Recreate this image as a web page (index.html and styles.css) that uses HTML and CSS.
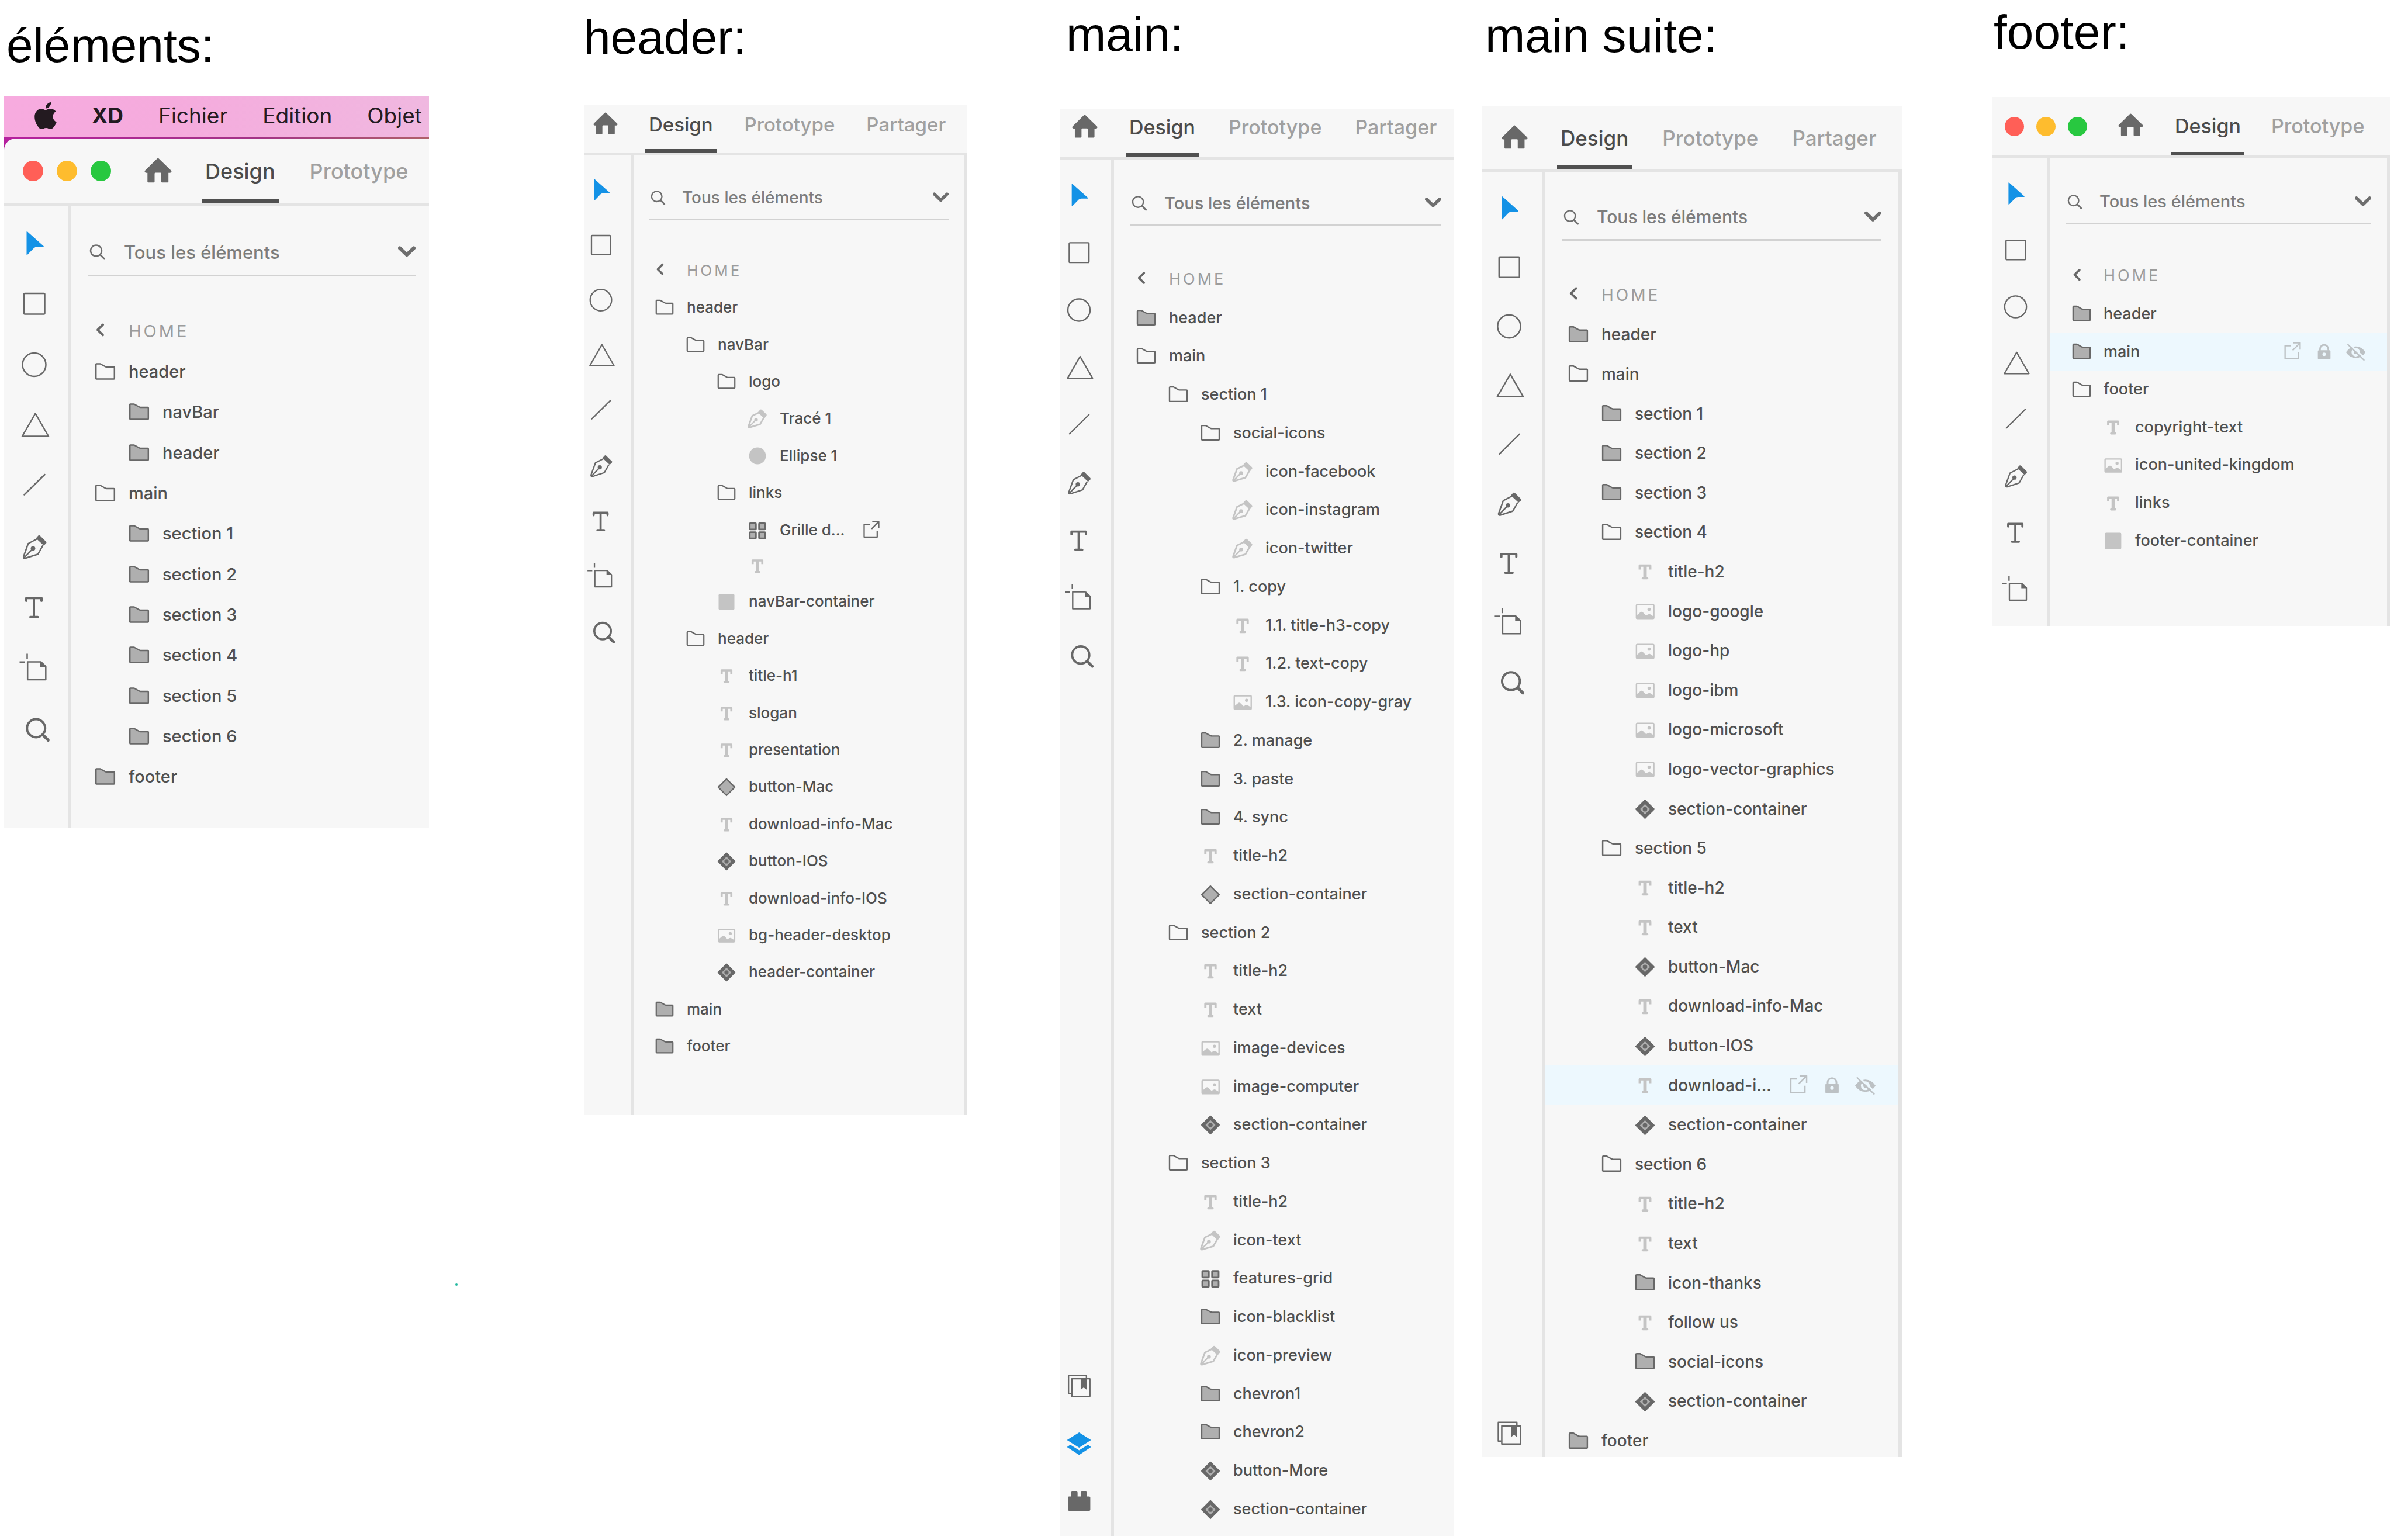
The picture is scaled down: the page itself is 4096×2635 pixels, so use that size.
FILE: index.html
```html
<!DOCTYPE html>
<html lang="fr">
<head>
<meta charset="utf-8">
<title>Calques XD</title>
<link rel="stylesheet" href="styles.css">
</head>
<body>
<svg class="sprite" aria-hidden="true">
  <symbol id="apple" viewBox="0 0 24 24"><path fill="currentColor" d="M12.152 6.896c-.948 0-2.415-1.078-3.96-1.04-2.04.027-3.91 1.183-4.961 3.014-2.117 3.675-.546 9.103 1.519 12.09 1.013 1.454 2.208 3.09 3.792 3.039 1.52-.065 2.09-.987 3.935-.987 1.831 0 2.35.987 3.96.948 1.637-.026 2.676-1.48 3.676-2.948 1.156-1.688 1.636-3.325 1.662-3.415-.039-.013-3.182-1.221-3.22-4.857-.026-3.04 2.48-4.494 2.597-4.559-1.429-2.09-3.623-2.324-4.39-2.376-2-.156-3.675 1.09-4.61 1.09zM15.53 3.83c.843-1.012 1.4-2.427 1.245-3.83-1.207.052-2.662.805-3.532 1.818-.78.896-1.454 2.338-1.273 3.714 1.338.104 2.715-.688 3.559-1.701"/></symbol>
  <symbol id="home" viewBox="0 0 47 42"><path fill="currentColor" d="M22 .8Q23.3-.4 24.600.8L46 21.500Q47.500 25 44 25.200H41.200V40.500Q41.200 41.700 40 41.700H30.200Q29 41.700 29 40.500V26.500Q29 25 27.500 25H19Q17.500 25 17.500 26.500V40.500Q17.500 41.700 16.300 41.700H6.500Q5.300 41.700 5.300 40.500V25.200H3Q-.5 25 1 21.500Z"/></symbol>
  <symbol id="cursor" viewBox="0 0 60 60"><path fill="#1492e6" d="M16.500 10.500Q16.800 9.500 17.800 10.300L45.500 35Q46.500 36.300 45 36.500H34Q31 36.500 29 38.500L18 49.800Q16.800 50.800 16.500 49.500Z"/></symbol>
  <symbol id="square" viewBox="0 0 60 60"><rect class="line" x="12" y="12" width="35.500" height="35.500" rx="1.500"/></symbol>
  <symbol id="circle" viewBox="0 0 60 60"><circle class="line" cx="29.500" cy="30" r="20"/></symbol>
  <symbol id="triangle" viewBox="0 0 60 60"><path class="line" d="M31.500 9.500L54 48.500H9Z"/></symbol>
  <symbol id="stroke" viewBox="0 0 60 60"><path class="line" stroke-linecap="round" d="M12.500 44.500L47.500 10"/></symbol>
  <symbol id="pen" viewBox="0 0 60 60"><path class="line" d="M34.700 15L19.300 23L11.200 45.500Q10.800 48.800 14 48.300L36 41.200L44.500 26"/><path class="line" d="M12 47.500L27.500 31.500"/><circle fill="currentColor" cx="27.500" cy="31.300" r="3.900"/><path fill="currentColor" d="M36.600 9.200Q38 8.400 39.500 9.500L50 20Q51 21.500 50 22.500L46 26.500L32.500 14Z"/></symbol>
  <symbol id="type" viewBox="0 0 60 60"><path class="line w4" stroke-linecap="round" d="M16 17V12.300H42V17M29 12.300V44.800M23 44.800H35.500"/></symbol>
  <symbol id="artboard" viewBox="0 0 60 60"><path class="line" d="M41 17.500H18.200V48H49.300V25.500L41 17.500"/><path fill="currentColor" d="M40 17V26.200H50.300Z"/><path class="line" d="M17.500 3.500V12.500M4.500 17.800H13.500"/></symbol>
  <symbol id="zoom" viewBox="0 0 60 60"><circle class="line w4" cx="32.700" cy="27" r="15.500"/><path class="line w5" stroke-linecap="round" d="M44.500 38.500L53.500 47.500"/></symbol>
  <symbol id="library" viewBox="0 0 60 60"><path class="line" d="M15.800 43.500H10.700V11H43V16.500"/><rect class="line" x="16.700" y="17" width="32.500" height="31.500"/><path fill="currentColor" d="M32.600 17H43.500V36.800L38 32.500L32.600 36.800Z"/></symbol>
  <symbol id="layers" viewBox="0 0 60 60"><path fill="#1492e6" d="M29.800 9.500L51.300 23.200L29.800 36.800L7.900 23.200ZM7.900 35.800L13.900 31.700L29.800 41.600L45.700 31.700L51.300 35.800L29.800 50.100Z"/></symbol>
  <symbol id="plugin" viewBox="0 0 60 60"><path fill="currentColor" d="M11.500 21.500H15.300V14.500Q15.300 12.600 17.200 12.600H25.100Q27 12.600 27 14.500V21.500H32.600V14.500Q32.600 12.600 34.500 12.600H42Q43.800 12.600 43.800 14.500V21.500H48Q49.900 21.500 49.900 23.500V45.500Q49.900 47.400 48 47.400H11.600Q9.700 47.400 9.700 45.500V23.500Q9.700 21.500 11.500 21.500Z"/></symbol>
  <symbol id="search" viewBox="0 0 28 28"><circle class="line" cx="11.500" cy="12" r="9.500"/><path class="line w3" stroke-linecap="round" d="M18.500 19L25.500 26"/></symbol>
  <symbol id="chevron" viewBox="0 0 30 20"><path class="line w6" stroke-linecap="round" d="M3 3.500L15 15L27 3.500"/></symbol>
  <symbol id="back" viewBox="0 0 40 40"><path class="line w4" stroke-linecap="round" d="M16 8.500L7 17.400L16 26.300"/></symbol>
  <symbol id="open" viewBox="0 0 40 40"><path class="line" d="M4.200 7.500Q4.200 6.500 5.200 6.500H11.500L20.500 11.500Q21.500 12 22.500 12H34.800Q35.800 12 35.800 13V31.500Q35.800 32.500 34.800 32.500H5.200Q4.200 32.500 4.200 31.500Z"/></symbol>
  <symbol id="folder" viewBox="0 0 40 40"><path class="line filled" d="M4.200 7.500Q4.200 6.500 5.200 6.500H11.500L20.500 11.500Q21.500 12 22.500 12H34.800Q35.800 12 35.800 13V31.500Q35.800 32.500 34.800 32.500H5.200Q4.200 32.500 4.200 31.500Z"/></symbol>
  <symbol id="path" viewBox="0 0 40 40"><g color="#c4c4c4"><path class="line w3" d="M23.500 8.500L10 15L2.800 35Q2.500 37.500 5.500 36.800L25 31L32.500 18"/><path class="line" d="M3.500 36.500L17 22.500"/><circle fill="currentColor" cx="17.300" cy="22.500" r="3.400"/><path fill="currentColor" d="M25 3.400Q26.500 2.200 28 3.400L37 12Q38.200 13.500 37 15L33 20L20.500 8.500Z"/></g></symbol>
  <symbol id="ellipse" viewBox="0 0 40 40"><circle fill="#c4c4c4" cx="20" cy="20" r="16"/></symbol>
  <symbol id="rectangle" viewBox="0 0 40 40"><rect fill="#c4c4c4" x="5" y="6" width="30" height="30" rx="2"/></symbol>
  <symbol id="text" viewBox="0 0 40 40"><g color="#c4c4c4"><path class="line w4" d="M10.800 17V10H29.200V17" stroke-linecap="butt"/><path class="line w6" d="M20 9V32"/><path class="line w4" stroke-linecap="round" d="M16.300 32H23.700"/></g></symbol>
  <symbol id="image" viewBox="0 0 40 40"><g color="#c4c4c4"><rect class="line" x="5" y="9" width="30.500" height="24" rx="1.500"/><path fill="currentColor" d="M5 28L12 22Q14 20.500 16 22L22 28Q26 24.500 28.500 25.500L35 29.500V33.500H5Z"/><circle fill="currentColor" cx="27.200" cy="17" r="2.900"/></g></symbol>
  <symbol id="grid" viewBox="0 0 40 40"><g class="line w3 filled"><rect x="5.300" y="7" width="11.800" height="11.800" rx="1"/><rect x="22.900" y="7" width="11.800" height="11.800" rx="1"/><rect x="5.300" y="24" width="11.800" height="11.800" rx="1"/><rect x="22.900" y="24" width="11.800" height="11.800" rx="1"/></g></symbol>
  <symbol id="instance" viewBox="0 0 40 40"><path class="line filled" d="M20 5.300L35.700 21L20 36.700L4.300 21Z"/></symbol>
  <symbol id="component" viewBox="0 0 40 40"><path fill="currentColor" stroke="currentColor" stroke-width="2" stroke-linejoin="round" d="M20 5L36 21L20 37L4 21Z"/><path fill="#afafaf" d="M20 12L29 21L20 30L11 21Z"/><circle fill="currentColor" cx="20" cy="21" r="4"/></symbol>
  <symbol id="export" viewBox="0 0 40 40"><path class="line" d="M16.800 9.300H6.100V33.300H30.900V21.300M20.200 17.800L33.900 3.900M21.500 3.900H33.900V16.400"/></symbol>
  <symbol id="lock" viewBox="0 0 40 40"><path class="line w3" d="M12.300 18V15.500A7.700 7.700 0 0 1 27.700 15.500V18"/><path fill="currentColor" fill-rule="evenodd" d="M10.300 17.500H29.700Q31.700 17.500 31.700 19.500V32.700Q31.700 34.700 29.700 34.700H10.300Q8.300 34.700 8.300 32.700V19.500Q8.300 17.500 10.300 17.500ZM20 22A3.200 3.200 0 1 0 20 28.400A3.200 3.200 0 1 0 20 22Z"/></symbol>
  <symbol id="hidden" viewBox="0 0 40 40"><path fill="currentColor" fill-rule="evenodd" d="M2 21.300Q9 10.500 20 10.500T38 21.300Q31 32 20 32T2 21.300ZM20 13.500A7.800 7.800 0 1 0 20 29.100A7.800 7.800 0 1 0 20 13.500Z"/><circle fill="currentColor" cx="20" cy="21.300" r="3.500"/><path stroke="#edf8fe" stroke-width="3" d="M6.500 4.500L39 34.500"/><path class="line" d="M5 6.500L36 36.500"/></symbol>
</svg>

<main class="board">

<section class="column elements">
  <h2 class="title">éléments:</h2>
  <div class="panel">
    <nav class="menubar" aria-label="Menu">
      <svg class="apple"><use href="#apple"/></svg>
      <a class="app" href="#">XD</a><a href="#">Fichier</a><a href="#">Edition</a><a href="#">Objet</a>
    </nav>
    <div class="window">
    <header class="tabbar">
      <span class="light red"></span><span class="light amber"></span><span class="light green"></span>
      <button class="home" aria-label="Accueil"><svg><use href="#home"/></svg></button>
      <button class="tab active">Design</button><button class="tab">Prototype</button>
    </header>
    <div class="body">
      <div class="rail"><div class="tools">
        <button aria-label="Sélection"><svg><use href="#cursor"/></svg></button>
        <button aria-label="Rectangle"><svg><use href="#square"/></svg></button>
        <button aria-label="Ellipse"><svg><use href="#circle"/></svg></button>
        <button aria-label="Polygone"><svg><use href="#triangle"/></svg></button>
        <button aria-label="Trait"><svg><use href="#stroke"/></svg></button>
        <button aria-label="Plume"><svg><use href="#pen"/></svg></button>
        <button aria-label="Texte"><svg><use href="#type"/></svg></button>
        <button aria-label="Plan de travail"><svg><use href="#artboard"/></svg></button>
        <button aria-label="Zoom"><svg><use href="#zoom"/></svg></button>
      </div></div>
      <div class="content">
        <div class="search"><svg class="glass"><use href="#search"/></svg><input type="text" aria-label="Rechercher" placeholder="Tous les éléments"><button aria-label="Filtrer"><svg><use href="#chevron"/></svg></button></div>
        <ul class="tree">
          <li class="crumb"><svg><use href="#back"/></svg>HOME</li>
          <li><svg><use href="#open"/></svg>header</li>
          <li class="l1"><svg><use href="#folder"/></svg>navBar</li>
          <li class="l1"><svg><use href="#folder"/></svg>header</li>
          <li><svg><use href="#open"/></svg>main</li>
          <li class="l1"><svg><use href="#folder"/></svg>section 1</li>
          <li class="l1"><svg><use href="#folder"/></svg>section 2</li>
          <li class="l1"><svg><use href="#folder"/></svg>section 3</li>
          <li class="l1"><svg><use href="#folder"/></svg>section 4</li>
          <li class="l1"><svg><use href="#folder"/></svg>section 5</li>
          <li class="l1"><svg><use href="#folder"/></svg>section 6</li>
          <li><svg><use href="#folder"/></svg>footer</li>
        </ul>
      </div>
    </div>
    </div>
  </div>
</section>

<span class="speck"></span>

<section class="column header">
  <h2 class="title">header:</h2>
  <div class="panel">
    <header class="tabbar">
      <button class="home" aria-label="Accueil"><svg><use href="#home"/></svg></button>
      <button class="tab active">Design</button><button class="tab">Prototype</button><button class="tab">Partager</button>
    </header>
    <div class="body">
      <div class="rail"><div class="tools">
        <button aria-label="Sélection"><svg><use href="#cursor"/></svg></button>
        <button aria-label="Rectangle"><svg><use href="#square"/></svg></button>
        <button aria-label="Ellipse"><svg><use href="#circle"/></svg></button>
        <button aria-label="Polygone"><svg><use href="#triangle"/></svg></button>
        <button aria-label="Trait"><svg><use href="#stroke"/></svg></button>
        <button aria-label="Plume"><svg><use href="#pen"/></svg></button>
        <button aria-label="Texte"><svg><use href="#type"/></svg></button>
        <button aria-label="Plan de travail"><svg><use href="#artboard"/></svg></button>
        <button aria-label="Zoom"><svg><use href="#zoom"/></svg></button>
      </div></div>
      <div class="content">
        <div class="search"><svg class="glass"><use href="#search"/></svg><input type="text" aria-label="Rechercher" placeholder="Tous les éléments"><button aria-label="Filtrer"><svg><use href="#chevron"/></svg></button></div>
        <ul class="tree">
          <li class="crumb"><svg><use href="#back"/></svg>HOME</li>
          <li><svg><use href="#open"/></svg>header</li>
          <li class="l1"><svg><use href="#open"/></svg>navBar</li>
          <li class="l2"><svg><use href="#open"/></svg>logo</li>
          <li class="l3"><svg><use href="#path"/></svg>Tracé 1</li>
          <li class="l3"><svg><use href="#ellipse"/></svg>Ellipse 1</li>
          <li class="l2"><svg><use href="#open"/></svg>links</li>
          <li class="l3"><svg><use href="#grid"/></svg>Grille d...<span class="actions"><button aria-label="Exporter"><svg><use href="#export"/></svg></button></span></li>
          <li class="l3"><svg><use href="#text"/></svg></li>
          <li class="l2"><svg><use href="#rectangle"/></svg>navBar-container</li>
          <li class="l1"><svg><use href="#open"/></svg>header</li>
          <li class="l2"><svg><use href="#text"/></svg>title-h1</li>
          <li class="l2"><svg><use href="#text"/></svg>slogan</li>
          <li class="l2"><svg><use href="#text"/></svg>presentation</li>
          <li class="l2"><svg><use href="#instance"/></svg>button-Mac</li>
          <li class="l2"><svg><use href="#text"/></svg>download-info-Mac</li>
          <li class="l2"><svg><use href="#component"/></svg>button-IOS</li>
          <li class="l2"><svg><use href="#text"/></svg>download-info-IOS</li>
          <li class="l2"><svg><use href="#image"/></svg>bg-header-desktop</li>
          <li class="l2"><svg><use href="#component"/></svg>header-container</li>
          <li><svg><use href="#folder"/></svg>main</li>
          <li><svg><use href="#folder"/></svg>footer</li>
        </ul>
      </div>
    </div>
  </div>
</section>

<section class="column content-main">
  <h2 class="title">main:</h2>
  <div class="panel">
    <header class="tabbar">
      <button class="home" aria-label="Accueil"><svg><use href="#home"/></svg></button>
      <button class="tab active">Design</button><button class="tab">Prototype</button><button class="tab">Partager</button>
    </header>
    <div class="body">
      <div class="rail"><div class="tools">
        <button aria-label="Sélection"><svg><use href="#cursor"/></svg></button>
        <button aria-label="Rectangle"><svg><use href="#square"/></svg></button>
        <button aria-label="Ellipse"><svg><use href="#circle"/></svg></button>
        <button aria-label="Polygone"><svg><use href="#triangle"/></svg></button>
        <button aria-label="Trait"><svg><use href="#stroke"/></svg></button>
        <button aria-label="Plume"><svg><use href="#pen"/></svg></button>
        <button aria-label="Texte"><svg><use href="#type"/></svg></button>
        <button aria-label="Plan de travail"><svg><use href="#artboard"/></svg></button>
        <button aria-label="Zoom"><svg><use href="#zoom"/></svg></button>
      </div>
      <div class="views">
        <button aria-label="Bibliothèques"><svg><use href="#library"/></svg></button>
        <button aria-label="Calques"><svg><use href="#layers"/></svg></button>
        <button aria-label="Modules"><svg><use href="#plugin"/></svg></button>
      </div></div>
      <div class="content">
        <div class="search"><svg class="glass"><use href="#search"/></svg><input type="text" aria-label="Rechercher" placeholder="Tous les éléments"><button aria-label="Filtrer"><svg><use href="#chevron"/></svg></button></div>
        <ul class="tree">
          <li class="crumb"><svg><use href="#back"/></svg>HOME</li>
          <li><svg><use href="#folder"/></svg>header</li>
          <li><svg><use href="#open"/></svg>main</li>
          <li class="l1"><svg><use href="#open"/></svg>section 1</li>
          <li class="l2"><svg><use href="#open"/></svg>social-icons</li>
          <li class="l3"><svg><use href="#path"/></svg>icon-facebook</li>
          <li class="l3"><svg><use href="#path"/></svg>icon-instagram</li>
          <li class="l3"><svg><use href="#path"/></svg>icon-twitter</li>
          <li class="l2"><svg><use href="#open"/></svg>1. copy</li>
          <li class="l3"><svg><use href="#text"/></svg>1.1. title-h3-copy</li>
          <li class="l3"><svg><use href="#text"/></svg>1.2. text-copy</li>
          <li class="l3"><svg><use href="#image"/></svg>1.3. icon-copy-gray</li>
          <li class="l2"><svg><use href="#folder"/></svg>2. manage</li>
          <li class="l2"><svg><use href="#folder"/></svg>3. paste</li>
          <li class="l2"><svg><use href="#folder"/></svg>4. sync</li>
          <li class="l2"><svg><use href="#text"/></svg>title-h2</li>
          <li class="l2"><svg><use href="#instance"/></svg>section-container</li>
          <li class="l1"><svg><use href="#open"/></svg>section 2</li>
          <li class="l2"><svg><use href="#text"/></svg>title-h2</li>
          <li class="l2"><svg><use href="#text"/></svg>text</li>
          <li class="l2"><svg><use href="#image"/></svg>image-devices</li>
          <li class="l2"><svg><use href="#image"/></svg>image-computer</li>
          <li class="l2"><svg><use href="#component"/></svg>section-container</li>
          <li class="l1"><svg><use href="#open"/></svg>section 3</li>
          <li class="l2"><svg><use href="#text"/></svg>title-h2</li>
          <li class="l2"><svg><use href="#path"/></svg>icon-text</li>
          <li class="l2"><svg><use href="#grid"/></svg>features-grid</li>
          <li class="l2"><svg><use href="#folder"/></svg>icon-blacklist</li>
          <li class="l2"><svg><use href="#path"/></svg>icon-preview</li>
          <li class="l2"><svg><use href="#folder"/></svg>chevron1</li>
          <li class="l2"><svg><use href="#folder"/></svg>chevron2</li>
          <li class="l2"><svg><use href="#component"/></svg>button-More</li>
          <li class="l2"><svg><use href="#component"/></svg>section-container</li>
        </ul>
      </div>
    </div>
  </div>
</section>

<section class="column content-next">
  <h2 class="title">main suite:</h2>
  <div class="panel">
    <header class="tabbar">
      <button class="home" aria-label="Accueil"><svg><use href="#home"/></svg></button>
      <button class="tab active">Design</button><button class="tab">Prototype</button><button class="tab">Partager</button>
    </header>
    <div class="body">
      <div class="rail"><div class="tools">
        <button aria-label="Sélection"><svg><use href="#cursor"/></svg></button>
        <button aria-label="Rectangle"><svg><use href="#square"/></svg></button>
        <button aria-label="Ellipse"><svg><use href="#circle"/></svg></button>
        <button aria-label="Polygone"><svg><use href="#triangle"/></svg></button>
        <button aria-label="Trait"><svg><use href="#stroke"/></svg></button>
        <button aria-label="Plume"><svg><use href="#pen"/></svg></button>
        <button aria-label="Texte"><svg><use href="#type"/></svg></button>
        <button aria-label="Plan de travail"><svg><use href="#artboard"/></svg></button>
        <button aria-label="Zoom"><svg><use href="#zoom"/></svg></button>
      </div>
      <div class="views">
        <button aria-label="Bibliothèques"><svg><use href="#library"/></svg></button>
      </div></div>
      <div class="content">
        <div class="search"><svg class="glass"><use href="#search"/></svg><input type="text" aria-label="Rechercher" placeholder="Tous les éléments"><button aria-label="Filtrer"><svg><use href="#chevron"/></svg></button></div>
        <ul class="tree">
          <li class="crumb"><svg><use href="#back"/></svg>HOME</li>
          <li><svg><use href="#folder"/></svg>header</li>
          <li><svg><use href="#open"/></svg>main</li>
          <li class="l1"><svg><use href="#folder"/></svg>section 1</li>
          <li class="l1"><svg><use href="#folder"/></svg>section 2</li>
          <li class="l1"><svg><use href="#folder"/></svg>section 3</li>
          <li class="l1"><svg><use href="#open"/></svg>section 4</li>
          <li class="l2"><svg><use href="#text"/></svg>title-h2</li>
          <li class="l2"><svg><use href="#image"/></svg>logo-google</li>
          <li class="l2"><svg><use href="#image"/></svg>logo-hp</li>
          <li class="l2"><svg><use href="#image"/></svg>logo-ibm</li>
          <li class="l2"><svg><use href="#image"/></svg>logo-microsoft</li>
          <li class="l2"><svg><use href="#image"/></svg>logo-vector-graphics</li>
          <li class="l2"><svg><use href="#component"/></svg>section-container</li>
          <li class="l1"><svg><use href="#open"/></svg>section 5</li>
          <li class="l2"><svg><use href="#text"/></svg>title-h2</li>
          <li class="l2"><svg><use href="#text"/></svg>text</li>
          <li class="l2"><svg><use href="#component"/></svg>button-Mac</li>
          <li class="l2"><svg><use href="#text"/></svg>download-info-Mac</li>
          <li class="l2"><svg><use href="#component"/></svg>button-IOS</li>
          <li class="l2 hover"><svg><use href="#text"/></svg>download-i...<span class="actions"><button aria-label="Exporter"><svg><use href="#export"/></svg></button><button aria-label="Verrouiller"><svg><use href="#lock"/></svg></button><button aria-label="Masquer"><svg><use href="#hidden"/></svg></button></span></li>
          <li class="l2"><svg><use href="#component"/></svg>section-container</li>
          <li class="l1"><svg><use href="#open"/></svg>section 6</li>
          <li class="l2"><svg><use href="#text"/></svg>title-h2</li>
          <li class="l2"><svg><use href="#text"/></svg>text</li>
          <li class="l2"><svg><use href="#folder"/></svg>icon-thanks</li>
          <li class="l2"><svg><use href="#text"/></svg>follow us</li>
          <li class="l2"><svg><use href="#folder"/></svg>social-icons</li>
          <li class="l2"><svg><use href="#component"/></svg>section-container</li>
          <li><svg><use href="#folder"/></svg>footer</li>
        </ul>
      </div>
    </div>
  </div>
</section>

<section class="column footer">
  <h2 class="title">footer:</h2>
  <div class="panel">
    <header class="tabbar">
      <span class="light red"></span><span class="light amber"></span><span class="light green"></span>
      <button class="home" aria-label="Accueil"><svg><use href="#home"/></svg></button>
      <button class="tab active">Design</button><button class="tab">Prototype</button>
    </header>
    <div class="body">
      <div class="rail"><div class="tools">
        <button aria-label="Sélection"><svg><use href="#cursor"/></svg></button>
        <button aria-label="Rectangle"><svg><use href="#square"/></svg></button>
        <button aria-label="Ellipse"><svg><use href="#circle"/></svg></button>
        <button aria-label="Polygone"><svg><use href="#triangle"/></svg></button>
        <button aria-label="Trait"><svg><use href="#stroke"/></svg></button>
        <button aria-label="Plume"><svg><use href="#pen"/></svg></button>
        <button aria-label="Texte"><svg><use href="#type"/></svg></button>
        <button aria-label="Plan de travail"><svg><use href="#artboard"/></svg></button>
      </div></div>
      <div class="content">
        <div class="search"><svg class="glass"><use href="#search"/></svg><input type="text" aria-label="Rechercher" placeholder="Tous les éléments"><button aria-label="Filtrer"><svg><use href="#chevron"/></svg></button></div>
        <ul class="tree">
          <li class="crumb"><svg><use href="#back"/></svg>HOME</li>
          <li><svg><use href="#folder"/></svg>header</li>
          <li class="hover"><svg><use href="#folder"/></svg>main<span class="actions"><button aria-label="Exporter"><svg><use href="#export"/></svg></button><button aria-label="Verrouiller"><svg><use href="#lock"/></svg></button><button aria-label="Masquer"><svg><use href="#hidden"/></svg></button></span></li>
          <li><svg><use href="#open"/></svg>footer</li>
          <li class="l1"><svg><use href="#text"/></svg>copyright-text</li>
          <li class="l1"><svg><use href="#image"/></svg>icon-united-kingdom</li>
          <li class="l1"><svg><use href="#text"/></svg>links</li>
          <li class="l1"><svg><use href="#rectangle"/></svg>footer-container</li>
        </ul>
      </div>
    </div>
  </div>
</section>

</main>
</body>
</html>
```

FILE: styles.css
```css
* { box-sizing: border-box; }

body {
  margin: 0;
  background: #fff;
  color: #505050;
  font-family: Inter, "Liberation Sans", sans-serif;
  font-weight: 500;
}

button {
  margin: 0;
  padding: 0;
  border: 0;
  background: none;
  color: inherit;
  font: inherit;
}

svg { display: block; flex: none; overflow: visible; }
.sprite { position: absolute; width: 0; height: 0; }

/* Icon strokes */
.line { fill: none; stroke: currentColor; stroke-width: 2.5px; stroke-linejoin: round; }
.w3 { stroke-width: 3px; }
.w4 { stroke-width: 4px; }
.w5 { stroke-width: 5px; }
.w6 { stroke-width: 6px; }
.filled { fill: #afafaf; }

/* Five columns, separated by free tracks */
.board {
  display: grid;
  grid-template-columns: 727fr 265fr 655fr 160fr 674fr 47fr 720fr 154fr 680fr;
  align-items: start;
  padding: 0 7px;
}

.column { grid-row: 1; min-width: 0; padding-top: var(--top); }

.title {
  margin: 0 0 var(--title-gap) var(--title-x);
  color: #000;
  font: 400 82px/96px "Liberation Sans", Arial, sans-serif;
  white-space: nowrap;
}

.elements {
  grid-column: 1;
  --top: 30px; --title-gap: 39px; --title-x: 4px;
  --bar: 110px; --bar-x: 32px; --home: 47px; --home-gap: 51px; --tab: 36px; --tab-gap: 47px; --tab-top: 8px; --tab-bottom: 0px;
  --light: 35px; --light-gap: 23px; --lights-gap: 57px;
  --rail: 110px; --rail-x: 22px; --tool: 60px; --tools-top: 12px; --tools: 937px;
  --search-top: 40px; --search: 78px; --search-font: 31px; --search-left: 29px; --search-right: 23px; --glass: 28px; --glass-gap: 31px; --chevron: 30px;
  --tree-top: 59px; --tree: 832px; --tree-bottom: 53px;
  --font: 29px; --icon: 40px; --icon-gap: 20px; --indent: 58px; --tree-x: 38px;
}

.header {
  grid-column: 3;
  --top: 16px; --title-gap: 68px; --title-x: 0px;
  --bar: 81px; --bar-x: 16px; --home: 42px; --home-gap: 47px; --tab: 33px; --tab-gap: 42px; --tab-top: 0px; --tab-bottom: 10px;
  --rail: 81px; --rail-x: 2px; --tool: 55px; --tools-top: 11px; --tools: 853px;
  --search-top: 36px; --search: 72px; --search-font: 28px; --search-left: 26px; --search-right: 26px; --glass: 26px; --glass-gap: 28px; --chevron: 27px;
  --tree-top: 54px; --tree: 1391px; --tree-bottom: 86px;
  --font: 26px; --icon: 36px; --icon-gap: 20px; --indent: 53px; --tree-x: 34px;
  --edge: 5px; --actions-x: 140px;
}

.content-main {
  grid-column: 5;
  --top: 11px; --title-gap: 79px; --title-x: 10px;
  --bar: 82px; --bar-x: 20px; --home: 44px; --home-gap: 48px; --tab: 34px; --tab-gap: 45px; --tab-top: 0px; --tab-bottom: 13px;
  --rail: 87px; --rail-x: 4px; --tool: 57px; --tools-top: 11px; --tools: 889px; --views: 296px; --views-bottom: 10px;
  --search-top: 37px; --search: 74px; --search-font: 29px; --search-left: 28px; --search-right: 22px; --glass: 27px; --glass-gap: 29px; --chevron: 28px;
  --tree-top: 58px; --tree: 2170px; --tree-bottom: 13px;
  --font: 27px; --icon: 38px; --icon-gap: 20px; --indent: 55px; --tree-x: 36px;
}

.content-next {
  grid-column: 7;
  --top: 13px; --title-gap: 72px; --title-x: 6px;
  --bar: 108px; --bar-x: 34px; --home: 45px; --home-gap: 50px; --tab: 35px; --tab-gap: 46px; --tab-top: 8px; --tab-bottom: 0px;
  --rail: 104px; --rail-x: 18px; --tool: 59px; --tools-top: 11px; --tools: 914px; --views: 102px; --views-bottom: -10px;
  --search-top: 39px; --search: 76px; --search-font: 30px; --search-left: 29px; --search-right: 28px; --glass: 27px; --glass-gap: 30px; --chevron: 29px;
  --tree-top: 59px; --tree: 2028px; --tree-bottom: -6px;
  --font: 28px; --icon: 39px; --icon-gap: 20px; --indent: 57px; --tree-x: 37px;
  --edge: 8px; --actions-x: 36px; --actions-gap: 18px;
}

.footer {
  grid-column: 9;
  --top: 7px; --title-gap: 63px; --title-x: 2px;
  --bar: 100px; --bar-x: 21px; --home: 43px; --home-gap: 48px; --tab: 34px; --tab-gap: 40px; --tab-top: 4px; --tab-bottom: 0px;
  --light: 33px; --light-gap: 21px; --lights-gap: 53px;
  --rail: 94px; --rail-x: 12px; --tool: 56px; --tools-top: 12px; --tools: 775px;
  --search-top: 37px; --search: 73px; --search-font: 29px; --search-left: 27px; --search-right: 27px; --glass: 26px; --glass-gap: 29px; --chevron: 28px;
  --tree-top: 56px; --tree: 517px; --tree-bottom: 114px;
  --font: 27px; --icon: 37px; --icon-gap: 19px; --indent: 54px; --tree-x: 35px;
  --edge: 5px; --actions-x: 35px; --actions-gap: 17px;
}

.panel { overflow: hidden; background: #f7f7f7; }

/* macOS menu bar */
.menubar {
  display: flex;
  align-items: center;
  gap: 60px;
  height: 69px;
  padding: 0 0 4px 48px;
  background: linear-gradient(90deg, #f7abdf, #f5abdd 40%, #f0b8e0);
  color: #231a20;
  font-size: 37px;
  font-weight: 400;
  white-space: nowrap;
}
.menubar a { color: inherit; text-decoration: none; }
.menubar .app { font-weight: 700; }
.apple { width: 46px; height: 46px; margin-right: -4px; }

.elements .panel { background: linear-gradient(90deg, #b5209e, #a33486 60%, #b0606a); }
.window {
  margin-top: 3px;
  border-radius: 20px 0 0 0;
  background: #f7f7f7;
}

/* Mode tabs */
.tabbar {
  display: flex;
  align-items: stretch;
  height: calc(var(--bar) + 5px);
  padding-left: var(--bar-x);
  border-bottom: 5px solid #e4e4e4;
}
.light {
  align-self: center;
  width: var(--light);
  height: var(--light);
  margin-right: var(--light-gap);
  border-radius: 50%;
}
.red { background: #ff5f57; }
.amber { background: #febc2e; }
.green { background: #28c840; margin-right: var(--lights-gap); }
.home {
  display: flex;
  align-items: center;
  margin-right: var(--home-gap);
  padding: var(--tab-top) 0 calc(var(--tab-bottom) + 10px);
  color: #686868;
}
.home svg { width: var(--home); height: var(--home); }
.tab {
  margin-right: var(--tab-gap);
  padding: var(--tab-top) 6px var(--tab-bottom);
  border-bottom: 6px solid transparent;
  color: #a0a0a0;
  font-size: var(--tab);
}
.tab:last-child { margin-right: 0; }
.tab.active { border-bottom-color: #505050; color: #4b4b4b; }

/* Tool rail */
.body { display: flex; }
.rail {
  display: flex;
  flex: none;
  flex-direction: column;
  justify-content: space-between;
  box-sizing: content-box;
  width: var(--rail);
  border-right: 5px solid #e4e4e4;
  color: #686868;
}
.tools, .views { display: flex; flex-direction: column; padding-left: var(--rail-x); }
.tools { min-height: var(--tools); margin-top: var(--tools-top); }
.views { min-height: var(--views); margin-bottom: var(--views-bottom); }
.tools button, .views button { display: flex; flex: 1; align-items: center; }
.tools svg, .views svg { width: var(--tool); height: var(--tool); }

/* Layers */
.content {
  flex: 1;
  min-width: 0;
  border-right: var(--edge, 0) solid #e4e4e4;
}
.search {
  display: flex;
  align-items: center;
  height: calc(var(--search) + 3px);
  margin: var(--search-top) var(--search-right) var(--tree-top) var(--search-left);
  padding-left: 2px;
  border-bottom: 3px solid #d2d2d2;
  color: #6e6e6e;
}
.glass { width: var(--glass); height: var(--glass); margin-right: var(--glass-gap); }
.search input {
  flex: 1;
  min-width: 0;
  padding: 0;
  border: 0;
  outline: 0;
  background: none;
  font: 500 var(--search-font) Inter, "Liberation Sans", sans-serif;
}
.search input::placeholder { color: #7c7c7c; opacity: 1; }
.search button svg { width: var(--chevron); height: 20px; }

.tree {
  display: flex;
  flex-direction: column;
  min-height: var(--tree);
  margin: 0 0 var(--tree-bottom);
  padding: 0;
  list-style: none;
  font-size: var(--font);
  line-height: 40px;
}
.tree li {
  display: flex;
  flex: 1;
  align-items: center;
  padding-left: var(--tree-x);
  white-space: nowrap;
}
.tree svg { width: var(--icon); height: var(--icon); color: #686868; }
.tree li > svg { margin-right: var(--icon-gap); }
.tree .l1 { padding-left: calc(var(--tree-x) + var(--indent)); }
.tree .l2 { padding-left: calc(var(--tree-x) + 2 * var(--indent)); }
.tree .l3 { padding-left: calc(var(--tree-x) + 3 * var(--indent)); }
.tree .crumb { color: #9c9c9c; font-weight: 400; letter-spacing: 4px; }
.tree .hover { background: #edf8fe; }
.actions { display: flex; gap: var(--actions-gap); margin: 0 var(--actions-x) 0 auto; }
.hover .actions svg { color: #bcc1c4; }

/* Stray mark between the first two columns */
.speck {
  grid-column: 2;
  grid-row: 1;
  width: 4px;
  height: 4px;
  margin: 2196px 0 0 45px;
  border-radius: 50%;
  background: #25b9a0;
}
```
